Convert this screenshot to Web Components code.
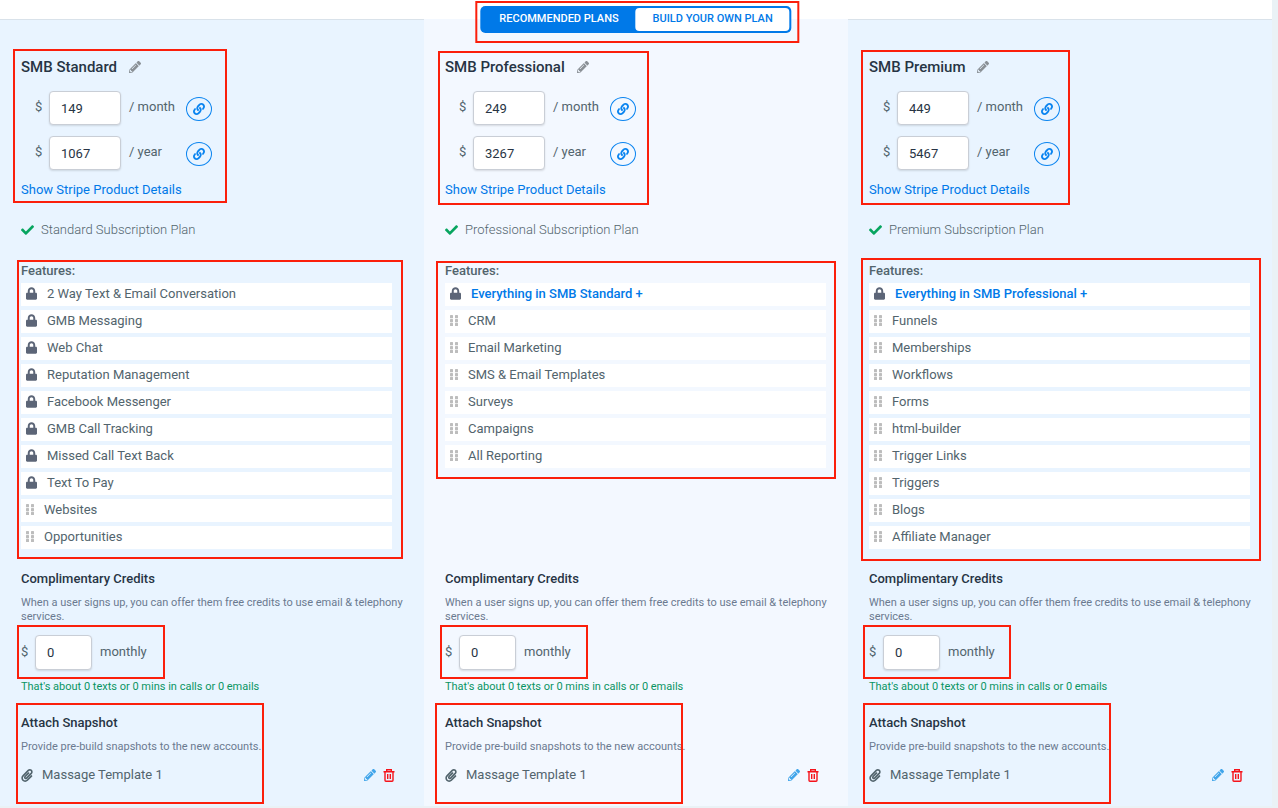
<!DOCTYPE html>
<html lang="en">
<head>
<meta charset="utf-8">
<title>SaaS plans</title>
<style>
  body {
    margin: 0;
    background: #eaf2f6;
    color: #52646d;
    font: 13px/20px Roboto, "Open Sans", sans-serif;
  }
</style>
</head>
<body>

<plan-board>
  <plan-toggle slot="toggle"></plan-toggle>
  <mark-box slot="toggle" style="--x: -5px; --y: -5px; --w: calc(100% + 13px); --h: 42px"></mark-box>

  <plan-column name="SMB Standard" month="149" year="1067" summary="Standard Subscription Plan" style="--list-end: 20px">
    <feature-item locked>2 Way Text &amp; Email Conversation</feature-item>
    <feature-item locked>GMB Messaging</feature-item>
    <feature-item locked>Web Chat</feature-item>
    <feature-item locked>Reputation Management</feature-item>
    <feature-item locked>Facebook Messenger</feature-item>
    <feature-item locked>GMB Call Tracking</feature-item>
    <feature-item locked>Missed Call Text Back</feature-item>
    <feature-item locked>Text To Pay</feature-item>
    <feature-item>Websites</feature-item>
    <feature-item>Opportunities</feature-item>
    <mark-box slot="marks" style="--x: 13px; --y: 29px; --w: 214px; --h: 154px"></mark-box>
    <mark-box slot="marks" style="--x: 17px; --y: 240px; --w: 386px; --h: 299px"></mark-box>
    <mark-box slot="marks" style="--x: 17px; --y: 605px; --w: 148px; --h: 54px"></mark-box>
    <mark-box slot="marks" style="--x: 16px; --y: 683px; --w: 248px; --h: 101px"></mark-box>
  </plan-column>

  <plan-column name="SMB Professional" month="249" year="3267" summary="Professional Subscription Plan" light>
    <feature-item locked lead>Everything in SMB Standard +</feature-item>
    <feature-item>CRM</feature-item>
    <feature-item>Email Marketing</feature-item>
    <feature-item>SMS &amp; Email Templates</feature-item>
    <feature-item>Surveys</feature-item>
    <feature-item>Campaigns</feature-item>
    <feature-item>All Reporting</feature-item>
    <mark-box slot="marks" style="--x: 14px; --y: 31px; --w: 211px; --h: 154px"></mark-box>
    <mark-box slot="marks" style="--x: 12px; --y: 241px; --w: 400px; --h: 218px"></mark-box>
    <mark-box slot="marks" style="--x: 16px; --y: 605px; --w: 148px; --h: 54px"></mark-box>
    <mark-box slot="marks" style="--x: 11px; --y: 683px; --w: 248px; --h: 101px"></mark-box>
  </plan-column>

  <plan-column name="SMB Premium" month="449" year="5467" summary="Premium Subscription Plan">
    <feature-item locked lead>Everything in SMB Professional +</feature-item>
    <feature-item>Funnels</feature-item>
    <feature-item>Memberships</feature-item>
    <feature-item>Workflows</feature-item>
    <feature-item>Forms</feature-item>
    <feature-item>html-builder</feature-item>
    <feature-item>Trigger Links</feature-item>
    <feature-item>Triggers</feature-item>
    <feature-item>Blogs</feature-item>
    <feature-item>Affiliate Manager</feature-item>
    <mark-box slot="marks" style="--x: 13px; --y: 30px; --w: 209px; --h: 155px"></mark-box>
    <mark-box slot="marks" style="--x: 13px; --y: 238px; --w: 400px; --h: 303px"></mark-box>
    <mark-box slot="marks" style="--x: 15px; --y: 605px; --w: 148px; --h: 54px"></mark-box>
    <mark-box slot="marks" style="--x: 15px; --y: 683px; --w: 248px; --h: 101px"></mark-box>
  </plan-column>
</plan-board>

<script>
// viewBox and body of every icon
const ICONS = {
  lock: ["0 0 448 512", `<path d="M400 224h-24v-72C376 68.2 307.8 0 224 0S72 68.2 72 152v72H48c-26.5 0-48 21.5-48 48v192c0 26.5 21.5 48 48 48h352c26.5 0 48-21.5 48-48V272c0-26.5-21.5-48-48-48zm-104 0H152v-72c0-39.7 32.3-72 72-72s72 32.3 72 72v72z"/>`],
  check: ["0 64 512 384", `<path d="M173.898 439.404l-166.4-166.4c-9.997-9.997-9.997-26.206 0-36.204l36.203-36.204c9.997-9.998 26.207-9.998 36.204 0L192 312.69 432.095 72.596c9.997-9.997 26.207-9.997 36.204 0l36.203 36.204c9.997 9.997 9.997 26.206 0 36.204l-294.4 294.401c-9.998 9.997-26.207 9.997-36.204-.001z"/>`],
  link: ["0 0 512 512", `<path d="M326.612 185.391c59.747 59.809 58.927 155.698.36 214.59-.11.12-.24.25-.36.37l-67.2 67.2c-59.27 59.27-155.699 59.262-214.96 0-59.27-59.26-59.27-155.7 0-214.96l37.106-37.106c9.84-9.84 26.786-3.3 27.294 10.606.648 17.722 3.826 35.527 9.69 52.721 1.986 5.822.567 12.262-3.783 16.612l-13.087 13.087c-28.026 28.026-28.905 73.66-1.155 101.96 28.024 28.579 74.086 28.749 102.325.51l67.2-67.19c28.191-28.191 28.073-73.757 0-101.83-3.701-3.694-7.429-6.564-10.341-8.569a16.037 16.037 0 0 1-6.947-12.606c-.396-10.567 3.348-21.456 11.698-29.806l21.054-21.055c5.521-5.521 14.182-6.199 20.584-1.731a152.482 152.482 0 0 1 20.522 17.197zM467.547 44.449c-59.261-59.262-155.69-59.27-214.96 0l-67.2 67.2c-.12.12-.25.25-.36.37-58.566 58.892-59.387 154.781.36 214.59a152.454 152.454 0 0 0 20.521 17.196c6.402 4.468 15.064 3.789 20.584-1.731l21.054-21.055c8.35-8.35 12.094-19.239 11.698-29.806a16.037 16.037 0 0 0-6.947-12.606c-2.912-2.005-6.64-4.875-10.341-8.569-28.073-28.073-28.191-73.639 0-101.83l67.2-67.19c28.239-28.239 74.3-28.069 102.325.51 27.75 28.3 26.872 73.934-1.155 101.96l-13.087 13.087c-4.35 4.35-5.769 10.79-3.783 16.612 5.864 17.194 9.042 34.999 9.69 52.721.509 13.906 17.454 20.446 27.294 10.606l37.106-37.106c59.271-59.259 59.271-155.699.001-214.959z"/>`],
  pencil: ["0 0 512 512", `<path d="M497.9 142.1l-46.1 46.1c-4.7 4.7-12.3 4.7-17 0l-111-111c-4.7-4.7-4.7-12.3 0-17l46.1-46.1c18.7-18.7 49.1-18.7 67.9 0l60.1 60.1c18.8 18.7 18.8 49.1 0 67.9zM284.2 99.8L21.6 362.4.4 483.9c-2.9 16.4 11.4 30.6 27.8 27.8l121.5-21.3 262.6-262.6c4.7-4.7 4.7-12.3 0-17l-111-111c-4.8-4.7-12.4-4.7-17.1 0zM124.1 339.9c-5.5-5.5-5.5-14.3 0-19.8l154-154c5.5-5.5 14.3-5.5 19.8 0s5.5 14.3 0 19.8l-154 154c-5.5 5.5-14.3 5.5-19.8 0zM88 424h48v36.3l-64.5 11.3-31.1-31.1L51.7 376H88v48z"/>`],
  clip: ["0 0 448 512", `<path d="M43.246 466.142c-58.43-60.289-57.341-157.511 1.386-217.581L254.392 34c44.316-45.332 116.351-45.336 160.671 0 43.89 44.894 43.943 117.329 0 162.276L232.214 383.128c-29.855 30.537-78.633 30.111-107.982-.998-28.275-29.97-27.368-77.473 1.452-106.953l143.743-146.835c6.182-6.314 16.312-6.422 22.626-.241l22.861 22.379c6.315 6.182 6.422 16.312.241 22.626L171.427 319.927c-4.932 5.045-5.236 13.428-.648 18.292 4.372 4.634 11.245 4.711 15.688.165l182.849-186.851c19.613-20.062 19.613-52.725-.011-72.798-19.189-19.627-49.957-19.637-69.154 0L90.39 293.295c-34.763 35.56-35.299 93.12-1.191 128.313 34.01 35.093 88.985 35.137 123.058.286l172.06-175.999c6.177-6.319 16.307-6.433 22.626-.256l22.877 22.364c6.319 6.177 6.434 16.307.256 22.626l-172.06 175.998c-59.576 60.938-155.943 60.216-214.77-.485z"/>`],
  trash: ["0 0 12 13", `<path fill="none" stroke="currentColor" stroke-width="1.4" d="M.5 2.7h11M3.7 2.5V.8h4.6v1.7M2 2.7v8.6q0 .9.9.9h6.2q.9 0 .9-.9V2.7M4.7 5v5M7.3 5v5"/>`],
  grip: ["0 0 8 11", `<rect width="3" height="3.3" rx=".6"/><rect x="5" width="3" height="3.3" rx=".6"/><rect y="3.9" width="3" height="3.3" rx=".6"/><rect x="5" y="3.9" width="3" height="3.3" rx=".6"/><rect y="7.7" width="3" height="3.3" rx=".6"/><rect x="5" y="7.7" width="3" height="3.3" rx=".6"/>`]
};

// Shared base: stamps the template into an open shadow root
class PlanElement extends HTMLElement {
  constructor() {
    super();
    this.attachShadow({ mode: "open" });
  }

  connectedCallback() {
    let t = document.createElement("template");
    t.innerHTML = this.template;
    this.shadowRoot.replaceChildren(t.content.cloneNode(true));
  }
}

class PlanIcon extends PlanElement {
  get template() {
    let [box, body] = ICONS[this.getAttribute("name")];
    return `
    <style>
      :host {
        display: block;
        flex: none;
        width: 12px;
        height: 12px;
      }

      svg {
        display: block;
        width: 100%;
        height: 100%;
        fill: currentColor;
      }
    </style>
    <svg viewBox="${box}" aria-hidden="true">${body}</svg>
    `;
  }
}

// Red outline laid over a part of the page
class MarkBox extends PlanElement {
  get template() {
    return `
    <style>
      :host {
        position: absolute;
        z-index: 2;
        left: var(--x);
        top: var(--y);
        width: var(--w);
        height: var(--h);
        box-sizing: border-box;
        border: 2px solid #fb1f0b;
        pointer-events: none;
      }
    </style>
    `;
  }
}

class PlanToggle extends PlanElement {
  get template() {
    return `
    <style>
      :host {
        display: flex;
        padding: 2px;
        border-radius: 5px;
        background: #0079e8;
      }

      button {
        height: 23px;
        padding: 0 17px 2px;
        border: 0;
        border-radius: 4px;
        background: none;
        color: #fff;
        font: 500 11px/20px Roboto, sans-serif;
        text-transform: uppercase;
        white-space: nowrap;
      }

      button + button {
        background: #fff;
        color: #0079e8;
      }
    </style>
    <button type="button" aria-pressed="true">Recommended plans</button>
    <button type="button" aria-pressed="false">Build your own plan</button>
    `;
  }
}

class FeatureItem extends PlanElement {
  get template() {
    let icon = this.hasAttribute("locked") ? "lock" : "grip";
    return `
    <style>
      :host {
        display: flex;
        align-items: center;
        gap: 10px;
        height: 23px;
        box-sizing: border-box;
        padding: 0 5px 2px;
        background: #fff;
      }

      :host([lead]) {
        color: #0079e8;
        font-weight: 500;
      }

      .lock {
        width: 11px;
        height: 13px;
        color: #5c6577;
      }

      .grip {
        width: 8px;
        height: 11px;
        color: #bdbdbd;
      }
    </style>
    <plan-icon name="${icon}" class="${icon}"></plan-icon>
    <span><slot></slot></span>
    `;
  }

  connectedCallback() {
    super.connectedCallback();
    this.setAttribute("role", "listitem");
  }
}

// Amount box with a dollar sign in front and the period behind
class PriceField extends PlanElement {
  get template() {
    return `
    <style>
      :host {
        display: flex;
        align-items: center;
      }

      span {
        width: 14px;
      }

      span, label {
        padding-bottom: 2px;
      }

      input {
        width: var(--field, 72px);
        height: var(--field-height, 34px);
        box-sizing: border-box;
        padding: 0 11px;
        border: 1px solid #c9ced6;
        border-radius: 4px;
        background: #fff;
        box-shadow: 0 1px 2px rgba(0, 0, 0, .12);
        color: #273444;
        font: inherit;
      }

      label {
        width: var(--period, auto);
        margin-left: 8px;
      }
    </style>
    <span>$</span>
    <input id="amount" type="text" inputmode="numeric" value="${this.getAttribute("value")}">
    <label for="amount">${this.getAttribute("period")}</label>
    <slot></slot>
    `;
  }
}

class PlanColumn extends PlanElement {
  get template() {
    let attr = name => this.getAttribute(name);
    return `
    <style>
      :host {
        position: relative;
        display: flex;
        flex-direction: column;
        box-sizing: border-box;
        min-width: 0;
        padding: 37px 12px 21px 21px;
        border-top: 1px solid #d9e2ea;
        background: #e9f4ff;
      }

      :host([light]) {
        border-top-color: #f3f8ff;
        background: #f3f8ff;
      }

      h2, h3, p {
        margin: 0;
        font-size: inherit;
      }

      h2, h3 {
        color: #273444;
        font-weight: 500;
      }

      button {
        padding: 0;
        border: 0;
        background: none;
        color: inherit;
      }

      .name {
        display: flex;
        align-items: center;
        gap: 12px;
      }

      h2 {
        font-size: 15px;
      }

      .name button {
        color: #8a9096;
      }

      .prices {
        display: grid;
        gap: 11px;
        margin: 14px 0 10px 14px;
        --period: 57px;
      }

      .prices button {
        display: grid;
        place-items: center;
        width: 26px;
        height: 24px;
        margin-top: 2px;
        border: 1px solid #0a84f0;
        border-radius: 50%;
        color: #0a84f0;
      }

      a {
        align-self: start;
        color: #0079e8;
        text-decoration: none;
      }

      .summary {
        display: flex;
        align-items: center;
        gap: 7px;
        margin: 20px 0 21px;
        font-weight: 300;
      }

      .summary plan-icon {
        width: 13px;
        height: 10px;
        color: #07a55f;
      }

      .features {
        flex: 1;
        margin-bottom: 20px;
      }

      .features p {
        font-weight: 500;
      }

      .list {
        display: grid;
        gap: 4px;
        margin-top: 2px;
        margin-right: var(--list-end, 10px);
      }

      .note {
        margin: 7px 0 11px;
        color: #6b7a90;
        font-size: 11px;
        line-height: 14px;
      }

      .credits {
        --field: 57px;
        --field-height: 35px;
      }

      .about {
        margin: 10px 0 19px;
        color: #0a9463;
        font-size: 11px;
        line-height: 14px;
      }

      .snapshot {
        display: flex;
        align-items: center;
        gap: 7px;
        margin-right: 17px;
      }

      .snapshot span {
        flex: 1;
        margin-left: 2px;
      }

      .snapshot > plan-icon {
        height: 13px;
      }

      .edit {
        color: #41a5ea;
      }

      .delete {
        color: #f5131b;
      }

      .delete plan-icon {
        height: 13px;
      }
    </style>

    <div class="name">
      <h2>${attr("name")}</h2>
      <button type="button" aria-label="Rename plan"><plan-icon name="pencil"></plan-icon></button>
    </div>
    <div class="prices">
      <price-field value="${attr("month")}" period="/ month">
        <button type="button" aria-label="Copy monthly link"><plan-icon name="link"></plan-icon></button>
      </price-field>
      <price-field value="${attr("year")}" period="/ year">
        <button type="button" aria-label="Copy yearly link"><plan-icon name="link"></plan-icon></button>
      </price-field>
    </div>
    <a href="#">Show Stripe Product Details</a>
    <p class="summary"><plan-icon name="check"></plan-icon>${attr("summary")}</p>

    <section class="features">
      <p>Features:</p>
      <div class="list" role="list"><slot></slot></div>
    </section>

    <h3>Complimentary Credits</h3>
    <p class="note">When a user signs up, you can offer them free credits to use email &amp; telephony services.</p>
    <price-field class="credits" value="0" period="monthly"></price-field>
    <p class="about">That's about 0 texts or 0 mins in calls or 0 emails</p>

    <h3>Attach Snapshot</h3>
    <p class="note">Provide pre-build snapshots to the new accounts.</p>
    <div class="snapshot">
      <plan-icon name="clip"></plan-icon>
      <span>Massage Template 1</span>
      <button type="button" class="edit" aria-label="Edit snapshot"><plan-icon name="pencil"></plan-icon></button>
      <button type="button" class="delete" aria-label="Delete snapshot"><plan-icon name="trash"></plan-icon></button>
    </div>
    <slot name="marks"></slot>
    `;
  }
}

class PlanBoard extends PlanElement {
  get template() {
    return `
    <style>
      :host {
        position: relative;
        display: block;
        padding-right: 6px;
      }

      header {
        height: 19px;
        background: #fff;
      }

      .toggle {
        position: absolute;
        z-index: 1;
        top: 6px;
        left: calc(50% - 3px);
        transform: translateX(-50%);
      }

      main {
        display: grid;
        grid-template-columns: repeat(3, 1fr);
      }
    </style>
    <header><div class="toggle"><slot name="toggle"></slot></div></header>
    <main><slot></slot></main>
    `;
  }
}

customElements.define("plan-icon", PlanIcon);
customElements.define("mark-box", MarkBox);
customElements.define("plan-toggle", PlanToggle);
customElements.define("feature-item", FeatureItem);
customElements.define("price-field", PriceField);
customElements.define("plan-column", PlanColumn);
customElements.define("plan-board", PlanBoard);
</script>
</body>
</html>
